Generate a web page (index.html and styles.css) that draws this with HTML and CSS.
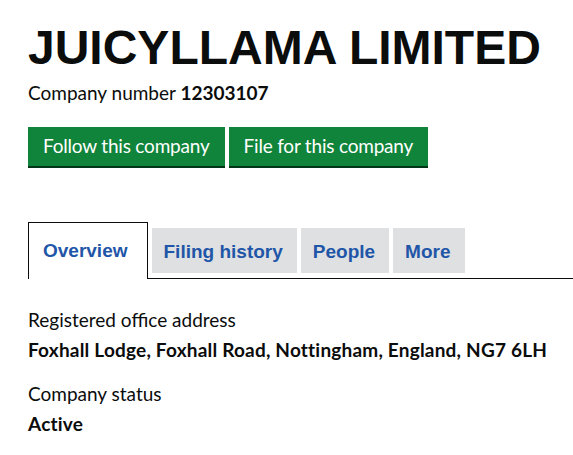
FILE: index.html
```html
<!DOCTYPE html>
<html lang="en">
<head>
    <meta charset="UTF-8">
    <meta name="viewport" content="width=device-width, initial-scale=1.0">
    <title>JUICYLLAMA LIMITED - Overview</title>
    <link rel="stylesheet" href="styles.css">
</head>
<body>
    <main class="page">
        <h1 class="company-name">JUICYLLAMA LIMITED</h1>
        <p class="company-number">Company number <strong>12303107</strong></p>

        <div class="actions">
            <a href="#" class="button">Follow this company</a>
            <a href="#" class="button">File for this company</a>
        </div>

        <nav class="tabs">
            <ul class="tab-list">
                <li class="tab active"><a href="#">Overview</a></li>
                <li class="tab"><a href="#">Filing history</a></li>
                <li class="tab"><a href="#">People</a></li>
                <li class="tab"><a href="#">More</a></li>
            </ul>
        </nav>

        <dl class="details">
            <dt>Registered office address</dt>
            <dd>Foxhall Lodge, Foxhall Road, Nottingham, England, NG7 6LH</dd>
            <dt>Company status</dt>
            <dd>Active</dd>
        </dl>
    </main>
</body>
</html>
```

FILE: styles.css
```css
body {
    margin: 0;
    background: white;
    color: #0b0c0c;
    font-family: Lato, Arial, sans-serif;
    overflow: hidden;
}
.page {
    padding: 0 0 0 28px;
}
.company-name {
    font-family: "Liberation Sans", Arial, sans-serif;
    font-size: 48px;
    line-height: 50px;
    font-weight: bold;
    margin: 23px 0 0;
}
.company-number {
    font-size: 19px;
    line-height: 24px;
    margin: 8px 0 0;
}
.company-number strong {
    font-weight: bold;
}
.actions {
    display: flex;
    gap: 4px;
    margin-top: 22px;
}
.button {
    display: block;
    background: #0f843a;
    color: white;
    text-decoration: none;
    font-size: 19px;
    line-height: 24px;
    letter-spacing: -0.2px;
    padding: 7px 15px 8px;
    box-shadow: 0 2px 0 #003618;
}
.tabs {
    margin-top: 56px;
}
.tab-list {
    display: flex;
    align-items: flex-end;
    list-style: none;
    margin: 0;
    padding: 0;
    border-bottom: 1px solid #0b0c0c;
}
.tab {
    margin: 0 4px 5px 0;
}
.tab a {
    display: block;
    background: #dee0e2;
    color: #1f56a8;
    font-family: "Liberation Sans", Arial, sans-serif;
    font-weight: bold;
    font-size: 19px;
    line-height: 24px;
    text-decoration: none;
    padding: 12px 14px 9px 12px;
}
.tab.active {
    border: 1px solid #0b0c0c;
    border-bottom: 0;
    margin-bottom: -1px;
    background: white;
}
.tab.active a {
    background: white;
    padding: 16px 19px 16px 14px;
}
.details {
    margin: 29px 0 0;
}
.details dt {
    font-size: 19px;
    line-height: 24px;
}
.details dd {
    margin: 6px 0 20px;
    font-size: 19px;
    line-height: 24px;
    font-weight: bold;
    letter-spacing: 0.2px;
}
```
